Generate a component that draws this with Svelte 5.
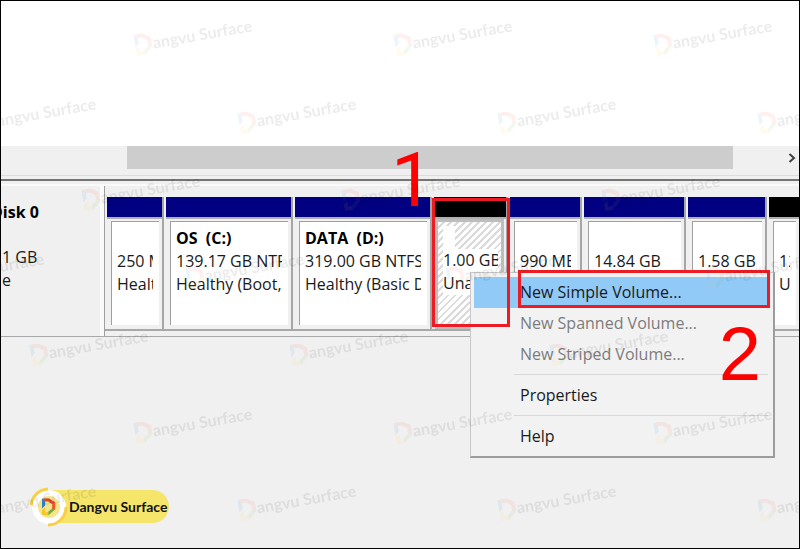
<script>
  const volumes = [
    { name: '', size: '250 MB', status: 'Healthy', span: 59 },
    { name: 'OS  (C:)', size: '139.17 GB NTFS', status: 'Healthy (Boot,', span: 129 },
    { name: 'DATA  (D:)', size: '319.00 GB NTFS', status: 'Healthy (Basic Data', span: 139 },
    { name: '', size: '1.00 GB', status: 'Unallocated', span: 76, free: true, selected: true },
    { name: '', size: '990 MB', status: 'Healthy', span: 74 },
    { name: '', size: '14.84 GB', status: 'Healthy', span: 104 },
    { name: '', size: '1.58 GB', status: 'Healthy', span: 81 },
    { name: '', size: '12', status: 'U', span: 32, free: true }
  ];
  const columns = volumes.map((v) => `minmax(0, ${v.span}fr)`).join(' ');

  const menu = [
    { label: 'New Simple Volume...', active: true },
    { label: 'New Spanned Volume...', disabled: true },
    { label: 'New Striped Volume...', disabled: true },
    { divider: true },
    { label: 'Properties' },
    { divider: true },
    { label: 'Help' }
  ];

  // every row of marks is shifted 104px against the one above it
  const marks = [];
  for (let row = 0; row < 7; row++) {
    const start = ((132 + row * 104) % 260) - 260;
    for (let x = start; x < 800; x += 260) {
      marks.push({ x, y: Math.round(33 + row * 77.5) });
    }
  }
</script>

{#snippet logo()}
  <svg class="logo" viewBox="0 0 18 22" aria-hidden="true">
    <path d="M0 0 L4 2 V9 L0 13 Z" fill="#1d83d8" />
    <path d="M1 0 H9 L17 5 L14 8 L8 4 H4 Z" fill="#e8452c" />
    <path d="M17 5 V14 L13 16 V8 Z" fill="#f0552f" />
    <path d="M17 14 L8 22 V17 L13 13 Z" fill="#6fae3c" />
    <path d="M0 15 L4 12 V18 L8 17 V22 L0 21 Z" fill="#f7c52d" />
  </svg>
{/snippet}

<main class="page">
  <div class="list-pane"></div>

  <div class="scrollbar">
    <div class="thumb"></div>
    <button class="arrow" aria-label="Scroll right">
      <svg viewBox="0 0 8 10"><path d="M1.500 1 L6 5 L1.500 9" fill="none" stroke="#404040" stroke-width="2" /></svg>
    </button>
  </div>
  <div class="splitter"></div>

  <section class="disk">
    <div class="disk-label">
      <strong>Disk 0</strong>
      <span>1 GB</span>
      <span>e</span>
    </div>
    <div class="volumes" style="grid-template-columns: {columns}">
      {#each volumes as volume}
        <div class="volume" class:free={volume.free} class:selected={volume.selected}>
          <div class="bar"></div>
          <div class="body">
            <div class="info">
              <strong>{volume.name}</strong>
              <span>{volume.size}</span>
              <span>{volume.status}</span>
            </div>
          </div>

          {#if volume.selected}
            <div class="menu" role="menu">
              {#each menu as item}
                {#if item.divider}
                  <hr />
                {:else}
                  <button role="menuitem" class:active={item.active} disabled={item.disabled}>{item.label}</button>
                {/if}
              {/each}
              <div class="outline item-outline"></div>
              <span class="step step-two">2</span>
            </div>
            <div class="outline volume-outline"></div>
            <span class="step step-one">1</span>
          {/if}
        </div>
      {/each}
    </div>
  </section>

  <div class="brand">
    <div class="badge">
      <svg class="ring" viewBox="0 0 40 40" aria-hidden="true">
        <circle cx="20" cy="20" r="17" fill="#fff" />
        <path d="M2 18 A18 18 0 0 1 19 2" fill="none" stroke="#f8cf45" stroke-width="3" />
        <path d="M37 20 A18 18 0 0 1 19 38" fill="none" stroke="#f8cf45" stroke-width="3" />
        <circle cx="20" cy="20" r="11" fill="#f5e58a" />
      </svg>
      {@render logo()}
    </div>
    <span>Dangvu Surface</span>
  </div>

  <div class="marks" aria-hidden="true">
    {#each marks as mark}
      <div class="mark" style="left: {mark.x}px; top: {mark.y}px">
        {@render logo()}
        <span>angvu Surface</span>
      </div>
    {/each}
  </div>
</main>

<style>
  :global(body) {
    margin: 0;
  }

  .page {
    position: relative;
    display: flex;
    flex-direction: column;
    box-sizing: border-box;
    min-height: 100vh;
    overflow: hidden;
    border: 1px solid #000;
    background: #f0f0f0;
    color: #1a1a1a;
    font-family: "Open Sans", "Noto Sans", sans-serif;
    font-size: 16px;
    line-height: 23px;
  }

  .list-pane {
    height: 145px;
    background: #fff;
  }

  .scrollbar {
    display: grid;
    grid-template-columns: 126fr 606fr 66fr;
    height: 23px;
  }
  .thumb {
    grid-column: 2;
    background: #cdcdcd;
  }
  .arrow {
    display: flex;
    align-items: center;
    justify-content: flex-end;
    padding: 0 3px;
    border: 0;
    background: none;
  }
  .arrow svg {
    width: 8px;
    height: 10px;
  }

  .splitter {
    height: 9px;
    margin-top: 6px;
    box-sizing: border-box;
    border-top: 1px solid #dcdcdc;
    background: linear-gradient(#f0f0f0 3px, #747474 3px, #747474 5px, #f0f0f0 5px);
  }

  .disk {
    display: flex;
    height: 153px;
    box-sizing: border-box;
    border-top: 2px solid #fafafa;
    border-bottom: 1px solid #a8a8a8;
  }
  .disk-label {
    display: flex;
    flex-direction: column;
    flex: 0 0 104px;
    box-sizing: border-box;
    padding: 15px 0 0 1px;
    border-right: 1px solid #a0a0a0;
    box-shadow: inset -4px 0 #fafafa;
  }
  .disk-label strong {
    margin: 0 0 22px -11px;
    color: #000;
  }

  .volumes {
    display: grid;
    flex: 1;
    min-width: 0;
    height: 134px;
    margin-top: 11px;
    box-sizing: border-box;
    border-bottom: 2px solid #a8a8a8;
  }
  .volume {
    position: relative;
    display: flex;
    flex-direction: column;
    border-right: 2px solid #a6a6a6;
  }
  .volume:last-child {
    border-right: 0;
  }
  .bar {
    flex: 0 0 20px;
    margin-left: 2px;
    border-bottom: 2px solid #b0b0b0;
    background: #000080;
  }
  .free .bar {
    background: #000;
  }
  .body {
    flex: 1;
    min-width: 0;
    margin: 2px 3px 4px 6px;
    padding: 5px 6px 0 5px;
    border-top: 1px solid #a0a0a0;
    border-left: 1px solid #a0a0a0;
    background: #fff;
  }
  .info {
    display: flex;
    flex-direction: column;
    overflow: hidden;
    white-space: pre;
  }
  .info strong {
    height: 23px;
    color: #000;
  }
  .selected {
    z-index: 1;
  }
  .selected .body {
    margin: 0 2px 0 3px;
    padding: 4px 3px 0 5px;
    border: 3px solid #bdbdbd;
    background: repeating-linear-gradient(135deg, #fff 0 3px, #dadada 3px 5px);
  }
  .selected .info > * {
    background: #fff;
  }
  .selected .info strong {
    width: 12px;
  }

  .menu {
    position: absolute;
    top: 75px;
    left: 38px;
    width: 305px;
    box-sizing: border-box;
    padding: 4px 3px;
    border: 1px solid #c8c8c8;
    border-right: 2px solid #9c9c9c;
    border-bottom: 2px solid #9c9c9c;
    background: #f2f2f2;
  }
  .menu button {
    display: block;
    width: 100%;
    height: 31px;
    padding: 0 0 0 46px;
    border: 0;
    background: none;
    color: #1a1a1a;
    font: inherit;
    text-align: left;
  }
  .menu button.active {
    background: #91c9f7;
  }
  .menu button:disabled {
    color: #7c7c7c;
  }
  .menu hr {
    height: 1px;
    margin: 4px 2px 5px 40px;
    border: 0;
    background: #d8d8d8;
  }

  .outline {
    position: absolute;
    box-sizing: border-box;
    border: 3px solid #ed1c24;
    pointer-events: none;
  }
  .item-outline {
    top: -3px;
    left: 47px;
    right: 3px;
    height: 38px;
  }
  .volume-outline {
    top: 1px;
    left: 0;
    right: -4px;
    bottom: 2px;
  }
  .step {
    position: absolute;
    color: #f00;
    font-family: Roboto, Arial, sans-serif;
    font-size: 76px;
    line-height: 76px;
  }
  .step-one {
    top: -55px;
    left: -41px;
  }
  .step-two {
    top: 43px;
    right: 12px;
    font-family: "Liberation Sans", Arial, sans-serif;
  }

  .brand {
    display: flex;
    align-items: center;
    align-self: flex-start;
    height: 33px;
    margin: auto 0 25px 31px;
    padding-right: 2px;
    border-radius: 17px;
    background: #f5e56b;
    color: #111;
    font-family: Lato, sans-serif;
    font-size: 14px;
    font-weight: 700;
  }
  .badge {
    position: relative;
    display: grid;
    place-items: center;
    width: 34px;
    margin-right: 3px;
  }
  .ring {
    position: absolute;
    width: 40px;
    height: 40px;
  }
  .badge .logo {
    position: relative;
    width: 14px;
    height: 18px;
  }

  .marks {
    position: absolute;
    inset: 0;
    z-index: 2;
    overflow: hidden;
    opacity: 0.08;
    pointer-events: none;
  }
  .mark {
    position: absolute;
    display: flex;
    align-items: center;
    transform: rotate(-10deg);
    transform-origin: 0 0;
    color: #000;
    font-family: Lato, sans-serif;
    font-size: 16px;
    font-weight: 700;
    white-space: nowrap;
  }
  .mark .logo {
    width: 18px;
    height: 22px;
  }
</style>
